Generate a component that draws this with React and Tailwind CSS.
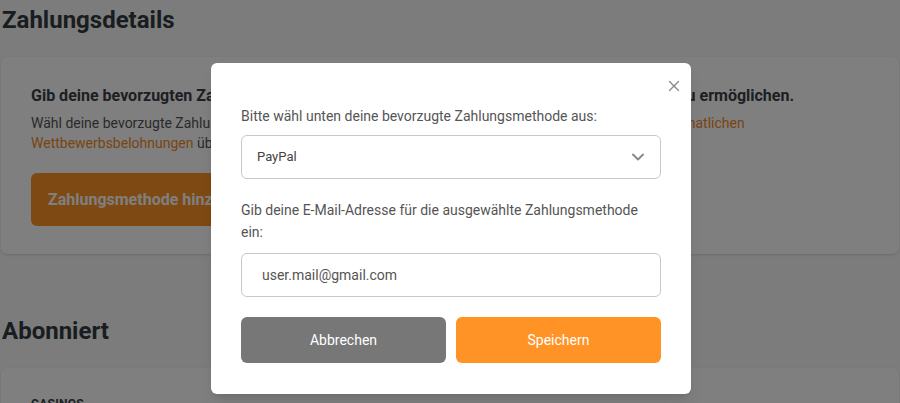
import React from 'react';
import { ChevronDown, X } from 'lucide-react';

const App = () => {
  return (
    <div className="relative h-[403px] overflow-hidden bg-[#f6f8f6] font-['Roboto',sans-serif]">
      {/* Page behind the modal */}
      <div className="px-[1px]">
        <h2 className="pl-[1px] pt-[4px] text-[24px] font-bold leading-[32px] text-[#353b41]">Zahlungsdetails</h2>
        <div className="mt-[21px] rounded-md bg-white px-[30px] pt-[27px] pb-[28px] shadow-sm">
          <p className="text-[16px] font-bold leading-[24px] text-[#3a4046]">
            Gib deine bevorzugten Zahlungsdetails an, um die Auszahlung deiner Belohnungen sicher zu ermöglichen.
          </p>
          <p className="mt-[5px] text-[14px] leading-[20px] text-[#555]">
            Wähl deine bevorzugte Zahlungsmethode und gib bitte deine Kontodaten vollständig ein, um alle deine <span className="text-[#f18a1f]">monatlichen</span>
            <br />
            <span className="text-[#f18a1f]">Wettbewerbsbelohnungen</span> über diese Methode zu erhalten.
          </p>
          <button className="mt-[20px] h-[53px] rounded-md bg-[#ff9326] px-[17px] text-[16px] font-bold text-white">
            Zahlungsmethode hinzufügen
          </button>
        </div>
        <h2 className="mt-[61px] pl-[1px] text-[24px] font-bold leading-[32px] text-[#353b41]">Abonniert</h2>
        <div className="mt-[21px] rounded-md bg-white px-[30px] pt-[27px] shadow-sm">
          <p className="text-[12px] font-bold uppercase tracking-wide text-[#3a4046]">Casinos</p>
        </div>
      </div>

      {/* Overlay */}
      <div className="absolute inset-0 bg-black/50" />

      {/* Modal */}
      <div className="absolute left-[211px] top-[63px] w-[480px] rounded-md bg-white px-[30px] pt-[43px] pb-[31px] shadow-lg">
        <button className="absolute right-[8px] top-[14px] text-[#888]">
          <X size={18} strokeWidth={1.75} />
        </button>
        <label className="block text-[14px] leading-[20px] text-[#555]">
          Bitte wähl unten deine bevorzugte Zahlungsmethode aus:
        </label>
        <div className="mt-[9px] flex h-[44px] items-center justify-between rounded-md border border-[#c8c8c8] pl-[15px] pr-[12px]">
          <span className="text-[13px] text-[#444]">PayPal</span>
          <ChevronDown size={20} strokeWidth={2.25} className="text-[#888]" />
        </div>
        <label className="mt-[20px] block text-[14px] leading-[22px] text-[#555]">
          Gib deine E-Mail-Adresse für die ausgewählte Zahlungsmethode ein:
        </label>
        <div className="mt-[10px] flex h-[44px] items-center rounded-md border border-[#c8c8c8] pl-[20px]">
          <span className="text-[14px] text-[#555]">user.mail@gmail.com</span>
        </div>
        <div className="mt-[20px] flex gap-[10px]">
          <button className="h-[46px] flex-1 rounded-md bg-[#777] text-[14px] text-white">Abbrechen</button>
          <button className="h-[46px] flex-1 rounded-md bg-[#ff9326] text-[14px] text-white">Speichern</button>
        </div>
      </div>
    </div>
  );
};

export default App;
